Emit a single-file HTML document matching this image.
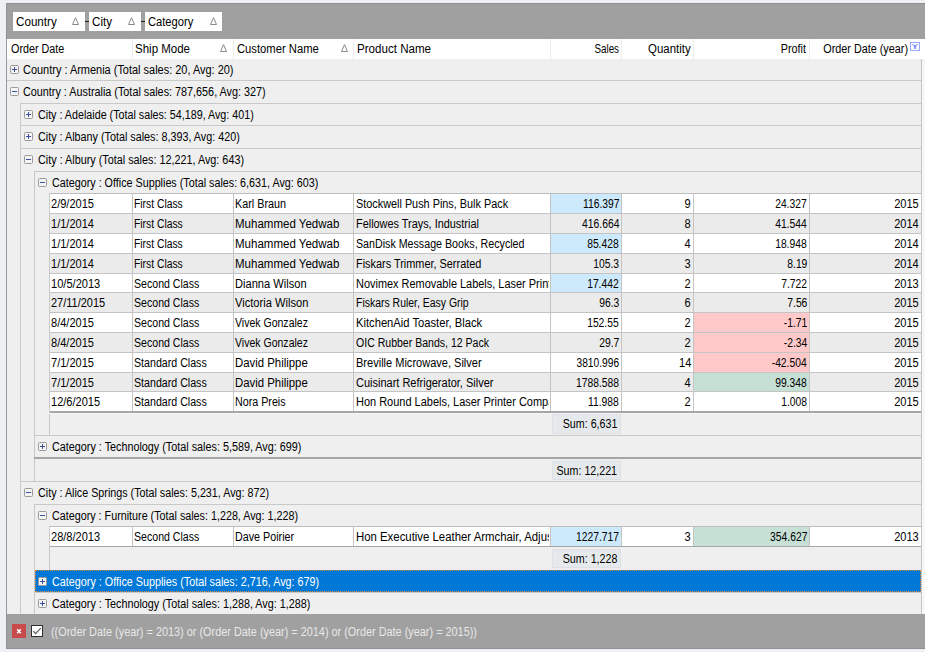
<!DOCTYPE html>
<html><head><meta charset="utf-8"><style>
html,body{margin:0;padding:0}
body{width:925px;height:652px;position:relative;overflow:hidden;background:#eff0f3;font-family:"Liberation Sans",sans-serif;font-size:12px;color:#000}
body>div{position:absolute}
.t{position:absolute;white-space:nowrap;line-height:14px}
.in{display:inline-block}
</style></head><body>
<div style="left:6px;top:3px;width:919px;height:36px;background:#a0a0a0"></div>
<div style="left:6px;top:3px;width:919px;height:1px;background:#8d9196"></div>
<div style="left:6px;top:3px;width:1px;height:36px;background:#8d9196"></div>
<div style="left:13px;top:12px;width:72px;height:19px;background:#fff"></div>
<span class="t" style="left:15.6px;top:15px;transform:scaleX(0.9700);transform-origin:0 0">Country</span>
<svg style="position:absolute;left:72px;top:17px" width="7" height="8"><path d="M3.5 0.6 L6.5 7.5 L0.5 7.5 Z" fill="none" stroke="#8a8a8a" stroke-width="1"/></svg>
<div style="left:89px;top:12px;width:52px;height:19px;background:#fff"></div>
<span class="t" style="left:91.6px;top:15px;transform:scaleX(0.9700);transform-origin:0 0">City</span>
<svg style="position:absolute;left:128px;top:17px" width="7" height="8"><path d="M3.5 0.6 L6.5 7.5 L0.5 7.5 Z" fill="none" stroke="#8a8a8a" stroke-width="1"/></svg>
<div style="left:145px;top:12px;width:77px;height:19px;background:#fff"></div>
<span class="t" style="left:147.6px;top:15px;transform:scaleX(0.9300);transform-origin:0 0">Category</span>
<svg style="position:absolute;left:210px;top:17px" width="7" height="8"><path d="M3.5 0.6 L6.5 7.5 L0.5 7.5 Z" fill="none" stroke="#8a8a8a" stroke-width="1"/></svg>
<div style="left:85px;top:21px;width:4px;height:1px;background:#222"></div>
<div style="left:141px;top:21px;width:4px;height:1px;background:#222"></div>
<div style="left:6px;top:39px;width:919px;height:20px;background:#fff"></div>
<div style="left:6px;top:39px;width:1px;height:20px;background:#959aa0"></div>
<div style="left:132px;top:39px;width:1px;height:20px;background:#ececec"></div>
<div style="left:233px;top:39px;width:1px;height:20px;background:#ececec"></div>
<div style="left:353px;top:39px;width:1px;height:20px;background:#ececec"></div>
<div style="left:550px;top:39px;width:1px;height:20px;background:#ececec"></div>
<div style="left:621px;top:39px;width:1px;height:20px;background:#ececec"></div>
<div style="left:693px;top:39px;width:1px;height:20px;background:#ececec"></div>
<div style="left:809px;top:39px;width:1px;height:20px;background:#ececec"></div>
<span class="t" style="left:10.5px;top:42px;transform:scaleX(0.8983);transform-origin:0 0">Order Date</span>
<span class="t" style="left:135px;top:42px;transform:scaleX(0.9589);transform-origin:0 0">Ship Mode</span>
<span class="t" style="left:236.5px;top:42px;transform:scaleX(0.9356);transform-origin:0 0">Customer Name</span>
<span class="t" style="left:356.5px;top:42px;transform:scaleX(0.9653);transform-origin:0 0">Product Name</span>
<span class="t" style="right:306px;top:42px;transform:scaleX(0.8172);transform-origin:100% 0">Sales</span>
<span class="t" style="right:234px;top:42px;transform:scaleX(0.9533);transform-origin:100% 0">Quantity</span>
<span class="t" style="right:118.5px;top:42px;transform:scaleX(0.9000);transform-origin:100% 0">Profit</span>
<span class="t" style="right:16.5px;top:42px;transform:scaleX(0.9021);transform-origin:100% 0">Order Date (year)</span>
<svg style="position:absolute;left:220px;top:44px" width="7" height="8"><path d="M3.5 0.6 L6.5 7.5 L0.5 7.5 Z" fill="none" stroke="#8a8a8a" stroke-width="1"/></svg>
<svg style="position:absolute;left:341px;top:44px" width="7" height="8"><path d="M3.5 0.6 L6.5 7.5 L0.5 7.5 Z" fill="none" stroke="#8a8a8a" stroke-width="1"/></svg>
<svg style="position:absolute;left:910px;top:42px" width="10" height="9"><rect x="0.5" y="0.5" width="9" height="8" fill="#fff" stroke="#9aa8ff"/><path d="M2.3 2.6 L4.5 3.6 L4.3 6.2 H5.7 L5.5 3.6 L7.7 2.6" fill="none" stroke="#7f90ff" stroke-width="1.1"/></svg>
<div style="left:7px;top:59px;width:914px;height:555px;background:#efefef"></div>
<div style="left:6px;top:59px;width:1px;height:555px;background:#959aa0"></div>
<div style="left:921px;top:59px;width:1px;height:555px;background:#c4c4c4"></div>
<div style="left:922px;top:59px;width:3px;height:555px;background:#f7f7f7"></div>
<svg style="position:absolute;left:10px;top:65px" width="9" height="9"><rect x="0.5" y="0.5" width="8" height="8" rx="1" fill="#f4f4f4" stroke="#9a9a9a"/><path d="M2 4.5 H7" stroke="#3b4f9a" stroke-width="1"/><path d="M4.5 2 V7" stroke="#3b4f9a" stroke-width="1"/></svg>
<span class="t" style="left:23.4px;top:63px;transform:scaleX(0.9130);transform-origin:0 0">Country : Armenia (Total sales: 20, Avg: 20)</span>
<div style="left:7px;top:80px;width:914px;height:1px;background:#c9c9c9"></div>
<svg style="position:absolute;left:10px;top:87px" width="9" height="9"><rect x="0.5" y="0.5" width="8" height="8" rx="1" fill="#f4f4f4" stroke="#9a9a9a"/><path d="M2 4.5 H7" stroke="#3b4f9a" stroke-width="1"/></svg>
<span class="t" style="left:23.4px;top:85px;transform:scaleX(0.9011);transform-origin:0 0">Country : Australia (Total sales: 787,656, Avg: 327)</span>
<div style="left:20px;top:103px;width:901px;height:1px;background:#c9c9c9"></div>
<svg style="position:absolute;left:24px;top:110px" width="9" height="9"><rect x="0.5" y="0.5" width="8" height="8" rx="1" fill="#f4f4f4" stroke="#9a9a9a"/><path d="M2 4.5 H7" stroke="#3b4f9a" stroke-width="1"/><path d="M4.5 2 V7" stroke="#3b4f9a" stroke-width="1"/></svg>
<span class="t" style="left:37.7px;top:108px;transform:scaleX(0.8942);transform-origin:0 0">City : Adelaide (Total sales: 54,189, Avg: 401)</span>
<div style="left:20px;top:125px;width:901px;height:1px;background:#c9c9c9"></div>
<svg style="position:absolute;left:24px;top:132px" width="9" height="9"><rect x="0.5" y="0.5" width="8" height="8" rx="1" fill="#f4f4f4" stroke="#9a9a9a"/><path d="M2 4.5 H7" stroke="#3b4f9a" stroke-width="1"/><path d="M4.5 2 V7" stroke="#3b4f9a" stroke-width="1"/></svg>
<span class="t" style="left:37.7px;top:130px;transform:scaleX(0.8987);transform-origin:0 0">City : Albany (Total sales: 8,393, Avg: 420)</span>
<div style="left:20px;top:148px;width:901px;height:1px;background:#c9c9c9"></div>
<svg style="position:absolute;left:24px;top:155px" width="9" height="9"><rect x="0.5" y="0.5" width="8" height="8" rx="1" fill="#f4f4f4" stroke="#9a9a9a"/><path d="M2 4.5 H7" stroke="#3b4f9a" stroke-width="1"/></svg>
<span class="t" style="left:37.7px;top:153px;transform:scaleX(0.9013);transform-origin:0 0">City : Albury (Total sales: 12,221, Avg: 643)</span>
<div style="left:34px;top:171px;width:887px;height:1px;background:#c9c9c9"></div>
<svg style="position:absolute;left:38px;top:178px" width="9" height="9"><rect x="0.5" y="0.5" width="8" height="8" rx="1" fill="#f4f4f4" stroke="#9a9a9a"/><path d="M2 4.5 H7" stroke="#3b4f9a" stroke-width="1"/></svg>
<span class="t" style="left:52.2px;top:176px;transform:scaleX(0.8963);transform-origin:0 0">Category : Office Supplies (Total sales: 6,631, Avg: 603)</span>
<div style="left:20px;top:103px;width:1px;height:511px;background:#c9c9c9"></div>
<div style="left:34px;top:171px;width:1px;height:310px;background:#c9c9c9"></div>
<div style="left:34px;top:504px;width:1px;height:110px;background:#c9c9c9"></div>
<div style="left:50px;top:194px;width:871px;height:19px;background:#ffffff"></div>
<div style="left:551px;top:194px;width:70px;height:19px;background:#cdeafc"></div>
<div style="left:132px;top:194px;width:1px;height:19px;background:#c4c4c4"></div>
<div style="left:233px;top:194px;width:1px;height:19px;background:#c4c4c4"></div>
<div style="left:353px;top:194px;width:1px;height:19px;background:#c4c4c4"></div>
<div style="left:550px;top:194px;width:1px;height:19px;background:#c4c4c4"></div>
<div style="left:621px;top:194px;width:1px;height:19px;background:#c4c4c4"></div>
<div style="left:693px;top:194px;width:1px;height:19px;background:#c4c4c4"></div>
<div style="left:809px;top:194px;width:1px;height:19px;background:#c4c4c4"></div>
<span class="t" style="left:51.3px;top:197px;width:79px;overflow:hidden"><span class="in" style="transform:scaleX(0.9200);transform-origin:0 0">2/9/2015</span></span>
<span class="t" style="left:134.3px;top:197px;width:97px;overflow:hidden"><span class="in" style="transform:scaleX(0.8607);transform-origin:0 0">First Class</span></span>
<span class="t" style="left:235.4px;top:197px;width:116px;overflow:hidden"><span class="in" style="transform:scaleX(0.9000);transform-origin:0 0">Karl Braun</span></span>
<span class="t" style="left:355.6px;top:197px;width:193px;overflow:hidden"><span class="in" style="transform:scaleX(0.9048);transform-origin:0 0">Stockwell Push Pins, Bulk Pack</span></span>
<span class="t" style="right:306px;top:197px;transform:scaleX(0.8600);transform-origin:100% 0">116.397</span>
<span class="t" style="right:234px;top:197px;transform:scaleX(0.9200);transform-origin:100% 0">9</span>
<span class="t" style="right:118px;top:197px;transform:scaleX(0.8600);transform-origin:100% 0">24.327</span>
<span class="t" style="right:6px;top:197px;transform:scaleX(0.9200);transform-origin:100% 0">2015</span>
<div style="left:50px;top:214px;width:871px;height:19px;background:#ebebeb"></div>
<div style="left:132px;top:214px;width:1px;height:19px;background:#c4c4c4"></div>
<div style="left:233px;top:214px;width:1px;height:19px;background:#c4c4c4"></div>
<div style="left:353px;top:214px;width:1px;height:19px;background:#c4c4c4"></div>
<div style="left:550px;top:214px;width:1px;height:19px;background:#c4c4c4"></div>
<div style="left:621px;top:214px;width:1px;height:19px;background:#c4c4c4"></div>
<div style="left:693px;top:214px;width:1px;height:19px;background:#c4c4c4"></div>
<div style="left:809px;top:214px;width:1px;height:19px;background:#c4c4c4"></div>
<span class="t" style="left:51.3px;top:217px;width:79px;overflow:hidden"><span class="in" style="transform:scaleX(0.9200);transform-origin:0 0">1/1/2014</span></span>
<span class="t" style="left:134.3px;top:217px;width:97px;overflow:hidden"><span class="in" style="transform:scaleX(0.8607);transform-origin:0 0">First Class</span></span>
<span class="t" style="left:235.4px;top:217px;width:116px;overflow:hidden"><span class="in" style="transform:scaleX(0.9598);transform-origin:0 0">Muhammed Yedwab</span></span>
<span class="t" style="left:355.6px;top:217px;width:193px;overflow:hidden"><span class="in" style="transform:scaleX(0.9075);transform-origin:0 0">Fellowes Trays, Industrial</span></span>
<span class="t" style="right:306px;top:217px;transform:scaleX(0.8600);transform-origin:100% 0">416.664</span>
<span class="t" style="right:234px;top:217px;transform:scaleX(0.9200);transform-origin:100% 0">8</span>
<span class="t" style="right:118px;top:217px;transform:scaleX(0.8600);transform-origin:100% 0">41.544</span>
<span class="t" style="right:6px;top:217px;transform:scaleX(0.9200);transform-origin:100% 0">2014</span>
<div style="left:50px;top:234px;width:871px;height:19px;background:#ffffff"></div>
<div style="left:551px;top:234px;width:70px;height:19px;background:#cdeafc"></div>
<div style="left:132px;top:234px;width:1px;height:19px;background:#c4c4c4"></div>
<div style="left:233px;top:234px;width:1px;height:19px;background:#c4c4c4"></div>
<div style="left:353px;top:234px;width:1px;height:19px;background:#c4c4c4"></div>
<div style="left:550px;top:234px;width:1px;height:19px;background:#c4c4c4"></div>
<div style="left:621px;top:234px;width:1px;height:19px;background:#c4c4c4"></div>
<div style="left:693px;top:234px;width:1px;height:19px;background:#c4c4c4"></div>
<div style="left:809px;top:234px;width:1px;height:19px;background:#c4c4c4"></div>
<span class="t" style="left:51.3px;top:237px;width:79px;overflow:hidden"><span class="in" style="transform:scaleX(0.9200);transform-origin:0 0">1/1/2014</span></span>
<span class="t" style="left:134.3px;top:237px;width:97px;overflow:hidden"><span class="in" style="transform:scaleX(0.8607);transform-origin:0 0">First Class</span></span>
<span class="t" style="left:235.4px;top:237px;width:116px;overflow:hidden"><span class="in" style="transform:scaleX(0.9598);transform-origin:0 0">Muhammed Yedwab</span></span>
<span class="t" style="left:355.6px;top:237px;width:193px;overflow:hidden"><span class="in" style="transform:scaleX(0.8894);transform-origin:0 0">SanDisk Message Books, Recycled</span></span>
<span class="t" style="right:306px;top:237px;transform:scaleX(0.8600);transform-origin:100% 0">85.428</span>
<span class="t" style="right:234px;top:237px;transform:scaleX(0.9200);transform-origin:100% 0">4</span>
<span class="t" style="right:118px;top:237px;transform:scaleX(0.8600);transform-origin:100% 0">18.948</span>
<span class="t" style="right:6px;top:237px;transform:scaleX(0.9200);transform-origin:100% 0">2014</span>
<div style="left:50px;top:254px;width:871px;height:19px;background:#ebebeb"></div>
<div style="left:132px;top:254px;width:1px;height:19px;background:#c4c4c4"></div>
<div style="left:233px;top:254px;width:1px;height:19px;background:#c4c4c4"></div>
<div style="left:353px;top:254px;width:1px;height:19px;background:#c4c4c4"></div>
<div style="left:550px;top:254px;width:1px;height:19px;background:#c4c4c4"></div>
<div style="left:621px;top:254px;width:1px;height:19px;background:#c4c4c4"></div>
<div style="left:693px;top:254px;width:1px;height:19px;background:#c4c4c4"></div>
<div style="left:809px;top:254px;width:1px;height:19px;background:#c4c4c4"></div>
<span class="t" style="left:51.3px;top:257px;width:79px;overflow:hidden"><span class="in" style="transform:scaleX(0.9200);transform-origin:0 0">1/1/2014</span></span>
<span class="t" style="left:134.3px;top:257px;width:97px;overflow:hidden"><span class="in" style="transform:scaleX(0.8607);transform-origin:0 0">First Class</span></span>
<span class="t" style="left:235.4px;top:257px;width:116px;overflow:hidden"><span class="in" style="transform:scaleX(0.9598);transform-origin:0 0">Muhammed Yedwab</span></span>
<span class="t" style="left:355.6px;top:257px;width:193px;overflow:hidden"><span class="in" style="transform:scaleX(0.9081);transform-origin:0 0">Fiskars Trimmer, Serrated</span></span>
<span class="t" style="right:306px;top:257px;transform:scaleX(0.8600);transform-origin:100% 0">105.3</span>
<span class="t" style="right:234px;top:257px;transform:scaleX(0.9200);transform-origin:100% 0">3</span>
<span class="t" style="right:118px;top:257px;transform:scaleX(0.8600);transform-origin:100% 0">8.19</span>
<span class="t" style="right:6px;top:257px;transform:scaleX(0.9200);transform-origin:100% 0">2014</span>
<div style="left:50px;top:274px;width:871px;height:18px;background:#ffffff"></div>
<div style="left:551px;top:274px;width:70px;height:18px;background:#cdeafc"></div>
<div style="left:132px;top:274px;width:1px;height:18px;background:#c4c4c4"></div>
<div style="left:233px;top:274px;width:1px;height:18px;background:#c4c4c4"></div>
<div style="left:353px;top:274px;width:1px;height:18px;background:#c4c4c4"></div>
<div style="left:550px;top:274px;width:1px;height:18px;background:#c4c4c4"></div>
<div style="left:621px;top:274px;width:1px;height:18px;background:#c4c4c4"></div>
<div style="left:693px;top:274px;width:1px;height:18px;background:#c4c4c4"></div>
<div style="left:809px;top:274px;width:1px;height:18px;background:#c4c4c4"></div>
<span class="t" style="left:51.3px;top:277px;width:79px;overflow:hidden"><span class="in" style="transform:scaleX(0.9231);transform-origin:0 0">10/5/2013</span></span>
<span class="t" style="left:134.3px;top:277px;width:97px;overflow:hidden"><span class="in" style="transform:scaleX(0.8822);transform-origin:0 0">Second Class</span></span>
<span class="t" style="left:235.4px;top:277px;width:116px;overflow:hidden"><span class="in" style="transform:scaleX(0.9250);transform-origin:0 0">Dianna Wilson</span></span>
<span class="t" style="left:355.6px;top:277px;width:193px;overflow:hidden"><span class="in" style="transform:scaleX(0.9120);transform-origin:0 0">Novimex Removable Labels, Laser Printer</span></span>
<span class="t" style="right:306px;top:277px;transform:scaleX(0.8600);transform-origin:100% 0">17.442</span>
<span class="t" style="right:234px;top:277px;transform:scaleX(0.9200);transform-origin:100% 0">2</span>
<span class="t" style="right:118px;top:277px;transform:scaleX(0.8600);transform-origin:100% 0">7.722</span>
<span class="t" style="right:6px;top:277px;transform:scaleX(0.9200);transform-origin:100% 0">2013</span>
<div style="left:50px;top:293px;width:871px;height:19px;background:#ebebeb"></div>
<div style="left:132px;top:293px;width:1px;height:19px;background:#c4c4c4"></div>
<div style="left:233px;top:293px;width:1px;height:19px;background:#c4c4c4"></div>
<div style="left:353px;top:293px;width:1px;height:19px;background:#c4c4c4"></div>
<div style="left:550px;top:293px;width:1px;height:19px;background:#c4c4c4"></div>
<div style="left:621px;top:293px;width:1px;height:19px;background:#c4c4c4"></div>
<div style="left:693px;top:293px;width:1px;height:19px;background:#c4c4c4"></div>
<div style="left:809px;top:293px;width:1px;height:19px;background:#c4c4c4"></div>
<span class="t" style="left:51.3px;top:296px;width:79px;overflow:hidden"><span class="in" style="transform:scaleX(0.9153);transform-origin:0 0">27/11/2015</span></span>
<span class="t" style="left:134.3px;top:296px;width:97px;overflow:hidden"><span class="in" style="transform:scaleX(0.8822);transform-origin:0 0">Second Class</span></span>
<span class="t" style="left:235.4px;top:296px;width:116px;overflow:hidden"><span class="in" style="transform:scaleX(0.9266);transform-origin:0 0">Victoria Wilson</span></span>
<span class="t" style="left:355.6px;top:296px;width:193px;overflow:hidden"><span class="in" style="transform:scaleX(0.8711);transform-origin:0 0">Fiskars Ruler, Easy Grip</span></span>
<span class="t" style="right:306px;top:296px;transform:scaleX(0.8600);transform-origin:100% 0">96.3</span>
<span class="t" style="right:234px;top:296px;transform:scaleX(0.9200);transform-origin:100% 0">6</span>
<span class="t" style="right:118px;top:296px;transform:scaleX(0.8600);transform-origin:100% 0">7.56</span>
<span class="t" style="right:6px;top:296px;transform:scaleX(0.9200);transform-origin:100% 0">2015</span>
<div style="left:50px;top:313px;width:871px;height:19px;background:#ffffff"></div>
<div style="left:694px;top:313px;width:115px;height:19px;background:#ffc9c9"></div>
<div style="left:132px;top:313px;width:1px;height:19px;background:#c4c4c4"></div>
<div style="left:233px;top:313px;width:1px;height:19px;background:#c4c4c4"></div>
<div style="left:353px;top:313px;width:1px;height:19px;background:#c4c4c4"></div>
<div style="left:550px;top:313px;width:1px;height:19px;background:#c4c4c4"></div>
<div style="left:621px;top:313px;width:1px;height:19px;background:#c4c4c4"></div>
<div style="left:693px;top:313px;width:1px;height:19px;background:#c4c4c4"></div>
<div style="left:809px;top:313px;width:1px;height:19px;background:#c4c4c4"></div>
<span class="t" style="left:51.3px;top:316px;width:79px;overflow:hidden"><span class="in" style="transform:scaleX(0.9200);transform-origin:0 0">8/4/2015</span></span>
<span class="t" style="left:134.3px;top:316px;width:97px;overflow:hidden"><span class="in" style="transform:scaleX(0.8822);transform-origin:0 0">Second Class</span></span>
<span class="t" style="left:235.4px;top:316px;width:116px;overflow:hidden"><span class="in" style="transform:scaleX(0.8771);transform-origin:0 0">Vivek Gonzalez</span></span>
<span class="t" style="left:355.6px;top:316px;width:193px;overflow:hidden"><span class="in" style="transform:scaleX(0.9328);transform-origin:0 0">KitchenAid Toaster, Black</span></span>
<span class="t" style="right:306px;top:316px;transform:scaleX(0.8600);transform-origin:100% 0">152.55</span>
<span class="t" style="right:234px;top:316px;transform:scaleX(0.9200);transform-origin:100% 0">2</span>
<span class="t" style="right:118px;top:316px;transform:scaleX(0.8600);transform-origin:100% 0">-1.71</span>
<span class="t" style="right:6px;top:316px;transform:scaleX(0.9200);transform-origin:100% 0">2015</span>
<div style="left:50px;top:333px;width:871px;height:19px;background:#ebebeb"></div>
<div style="left:694px;top:333px;width:115px;height:19px;background:#ffc9c9"></div>
<div style="left:132px;top:333px;width:1px;height:19px;background:#c4c4c4"></div>
<div style="left:233px;top:333px;width:1px;height:19px;background:#c4c4c4"></div>
<div style="left:353px;top:333px;width:1px;height:19px;background:#c4c4c4"></div>
<div style="left:550px;top:333px;width:1px;height:19px;background:#c4c4c4"></div>
<div style="left:621px;top:333px;width:1px;height:19px;background:#c4c4c4"></div>
<div style="left:693px;top:333px;width:1px;height:19px;background:#c4c4c4"></div>
<div style="left:809px;top:333px;width:1px;height:19px;background:#c4c4c4"></div>
<span class="t" style="left:51.3px;top:336px;width:79px;overflow:hidden"><span class="in" style="transform:scaleX(0.9200);transform-origin:0 0">8/4/2015</span></span>
<span class="t" style="left:134.3px;top:336px;width:97px;overflow:hidden"><span class="in" style="transform:scaleX(0.8822);transform-origin:0 0">Second Class</span></span>
<span class="t" style="left:235.4px;top:336px;width:116px;overflow:hidden"><span class="in" style="transform:scaleX(0.8771);transform-origin:0 0">Vivek Gonzalez</span></span>
<span class="t" style="left:355.6px;top:336px;width:193px;overflow:hidden"><span class="in" style="transform:scaleX(0.8783);transform-origin:0 0">OIC Rubber Bands, 12 Pack</span></span>
<span class="t" style="right:306px;top:336px;transform:scaleX(0.8600);transform-origin:100% 0">29.7</span>
<span class="t" style="right:234px;top:336px;transform:scaleX(0.9200);transform-origin:100% 0">2</span>
<span class="t" style="right:118px;top:336px;transform:scaleX(0.8600);transform-origin:100% 0">-2.34</span>
<span class="t" style="right:6px;top:336px;transform:scaleX(0.9200);transform-origin:100% 0">2015</span>
<div style="left:50px;top:353px;width:871px;height:19px;background:#ffffff"></div>
<div style="left:694px;top:353px;width:115px;height:19px;background:#ffc9c9"></div>
<div style="left:132px;top:353px;width:1px;height:19px;background:#c4c4c4"></div>
<div style="left:233px;top:353px;width:1px;height:19px;background:#c4c4c4"></div>
<div style="left:353px;top:353px;width:1px;height:19px;background:#c4c4c4"></div>
<div style="left:550px;top:353px;width:1px;height:19px;background:#c4c4c4"></div>
<div style="left:621px;top:353px;width:1px;height:19px;background:#c4c4c4"></div>
<div style="left:693px;top:353px;width:1px;height:19px;background:#c4c4c4"></div>
<div style="left:809px;top:353px;width:1px;height:19px;background:#c4c4c4"></div>
<span class="t" style="left:51.3px;top:356px;width:79px;overflow:hidden"><span class="in" style="transform:scaleX(0.9200);transform-origin:0 0">7/1/2015</span></span>
<span class="t" style="left:134.3px;top:356px;width:97px;overflow:hidden"><span class="in" style="transform:scaleX(0.8864);transform-origin:0 0">Standard Class</span></span>
<span class="t" style="left:235.4px;top:356px;width:116px;overflow:hidden"><span class="in" style="transform:scaleX(0.9480);transform-origin:0 0">David Philippe</span></span>
<span class="t" style="left:355.6px;top:356px;width:193px;overflow:hidden"><span class="in" style="transform:scaleX(0.9191);transform-origin:0 0">Breville Microwave, Silver</span></span>
<span class="t" style="right:306px;top:356px;transform:scaleX(0.8500);transform-origin:100% 0">3810.996</span>
<span class="t" style="right:234px;top:356px;transform:scaleX(0.9200);transform-origin:100% 0">14</span>
<span class="t" style="right:118px;top:356px;transform:scaleX(0.8600);transform-origin:100% 0">-42.504</span>
<span class="t" style="right:6px;top:356px;transform:scaleX(0.9200);transform-origin:100% 0">2015</span>
<div style="left:50px;top:373px;width:871px;height:18px;background:#ebebeb"></div>
<div style="left:694px;top:373px;width:115px;height:18px;background:#c7e0d6"></div>
<div style="left:132px;top:373px;width:1px;height:18px;background:#c4c4c4"></div>
<div style="left:233px;top:373px;width:1px;height:18px;background:#c4c4c4"></div>
<div style="left:353px;top:373px;width:1px;height:18px;background:#c4c4c4"></div>
<div style="left:550px;top:373px;width:1px;height:18px;background:#c4c4c4"></div>
<div style="left:621px;top:373px;width:1px;height:18px;background:#c4c4c4"></div>
<div style="left:693px;top:373px;width:1px;height:18px;background:#c4c4c4"></div>
<div style="left:809px;top:373px;width:1px;height:18px;background:#c4c4c4"></div>
<span class="t" style="left:51.3px;top:376px;width:79px;overflow:hidden"><span class="in" style="transform:scaleX(0.9200);transform-origin:0 0">7/1/2015</span></span>
<span class="t" style="left:134.3px;top:376px;width:97px;overflow:hidden"><span class="in" style="transform:scaleX(0.8864);transform-origin:0 0">Standard Class</span></span>
<span class="t" style="left:235.4px;top:376px;width:116px;overflow:hidden"><span class="in" style="transform:scaleX(0.9480);transform-origin:0 0">David Philippe</span></span>
<span class="t" style="left:355.6px;top:376px;width:193px;overflow:hidden"><span class="in" style="transform:scaleX(0.9160);transform-origin:0 0">Cuisinart Refrigerator, Silver</span></span>
<span class="t" style="right:306px;top:376px;transform:scaleX(0.8600);transform-origin:100% 0">1788.588</span>
<span class="t" style="right:234px;top:376px;transform:scaleX(0.9200);transform-origin:100% 0">4</span>
<span class="t" style="right:118px;top:376px;transform:scaleX(0.8600);transform-origin:100% 0">99.348</span>
<span class="t" style="right:6px;top:376px;transform:scaleX(0.9200);transform-origin:100% 0">2015</span>
<div style="left:50px;top:392px;width:871px;height:19px;background:#ffffff"></div>
<div style="left:132px;top:392px;width:1px;height:19px;background:#c4c4c4"></div>
<div style="left:233px;top:392px;width:1px;height:19px;background:#c4c4c4"></div>
<div style="left:353px;top:392px;width:1px;height:19px;background:#c4c4c4"></div>
<div style="left:550px;top:392px;width:1px;height:19px;background:#c4c4c4"></div>
<div style="left:621px;top:392px;width:1px;height:19px;background:#c4c4c4"></div>
<div style="left:693px;top:392px;width:1px;height:19px;background:#c4c4c4"></div>
<div style="left:809px;top:392px;width:1px;height:19px;background:#c4c4c4"></div>
<span class="t" style="left:51.3px;top:395px;width:79px;overflow:hidden"><span class="in" style="transform:scaleX(0.9200);transform-origin:0 0">12/6/2015</span></span>
<span class="t" style="left:134.3px;top:395px;width:97px;overflow:hidden"><span class="in" style="transform:scaleX(0.8864);transform-origin:0 0">Standard Class</span></span>
<span class="t" style="left:235.4px;top:395px;width:116px;overflow:hidden"><span class="in" style="transform:scaleX(0.8929);transform-origin:0 0">Nora Preis</span></span>
<span class="t" style="left:355.6px;top:395px;width:193px;overflow:hidden"><span class="in" style="transform:scaleX(0.9148);transform-origin:0 0">Hon Round Labels, Laser Printer Compatible</span></span>
<span class="t" style="right:306px;top:395px;transform:scaleX(0.8600);transform-origin:100% 0">11.988</span>
<span class="t" style="right:234px;top:395px;transform:scaleX(0.9200);transform-origin:100% 0">2</span>
<span class="t" style="right:118px;top:395px;transform:scaleX(0.8600);transform-origin:100% 0">1.008</span>
<span class="t" style="right:6px;top:395px;transform:scaleX(0.9200);transform-origin:100% 0">2015</span>
<div style="left:49px;top:213px;width:872px;height:1px;background:#c4c4c4"></div>
<div style="left:49px;top:233px;width:872px;height:1px;background:#c4c4c4"></div>
<div style="left:49px;top:253px;width:872px;height:1px;background:#c4c4c4"></div>
<div style="left:49px;top:273px;width:872px;height:1px;background:#c4c4c4"></div>
<div style="left:49px;top:292px;width:872px;height:1px;background:#c4c4c4"></div>
<div style="left:49px;top:312px;width:872px;height:1px;background:#c4c4c4"></div>
<div style="left:49px;top:332px;width:872px;height:1px;background:#c4c4c4"></div>
<div style="left:49px;top:352px;width:872px;height:1px;background:#c4c4c4"></div>
<div style="left:49px;top:372px;width:872px;height:1px;background:#c4c4c4"></div>
<div style="left:49px;top:391px;width:872px;height:1px;background:#c4c4c4"></div>
<div style="left:49px;top:193px;width:872px;height:1px;background:#bdbdbd"></div>
<div style="left:49px;top:411px;width:872px;height:2px;background:#a6a6a6"></div>
<div style="left:49px;top:193px;width:1px;height:242px;background:#c9c9c9"></div>
<div style="left:49px;top:413px;width:872px;height:1px;background:#f6f6f8"></div>
<div style="left:552px;top:414px;width:69px;height:20px;background:#e6e9ec;border:1px solid #dde1e5;box-sizing:border-box"></div>
<span class="t" style="right:308px;top:417px;transform:scaleX(0.8900);transform-origin:100% 0">Sum: 6,631</span>
<div style="left:34px;top:435px;width:887px;height:1px;background:#c9c9c9"></div>
<svg style="position:absolute;left:38px;top:442px" width="9" height="9"><rect x="0.5" y="0.5" width="8" height="8" rx="1" fill="#f4f4f4" stroke="#9a9a9a"/><path d="M2 4.5 H7" stroke="#3b4f9a" stroke-width="1"/><path d="M4.5 2 V7" stroke="#3b4f9a" stroke-width="1"/></svg>
<span class="t" style="left:52.2px;top:440px;transform:scaleX(0.9000);transform-origin:0 0">Category : Technology (Total sales: 5,589, Avg: 699)</span>
<div style="left:34px;top:457px;width:887px;height:2px;background:#a6a6a6"></div>
<div style="left:552px;top:461px;width:69px;height:19px;background:#e6e9ec;border:1px solid #dde1e5;box-sizing:border-box"></div>
<span class="t" style="right:308px;top:464px;transform:scaleX(0.8900);transform-origin:100% 0">Sum: 12,221</span>
<div style="left:20px;top:481px;width:901px;height:1px;background:#c9c9c9"></div>
<svg style="position:absolute;left:24px;top:488px" width="9" height="9"><rect x="0.5" y="0.5" width="8" height="8" rx="1" fill="#f4f4f4" stroke="#9a9a9a"/><path d="M2 4.5 H7" stroke="#3b4f9a" stroke-width="1"/></svg>
<span class="t" style="left:37.7px;top:486px;transform:scaleX(0.8957);transform-origin:0 0">City : Alice Springs (Total sales: 5,231, Avg: 872)</span>
<div style="left:34px;top:504px;width:887px;height:1px;background:#c9c9c9"></div>
<svg style="position:absolute;left:38px;top:511px" width="9" height="9"><rect x="0.5" y="0.5" width="8" height="8" rx="1" fill="#f4f4f4" stroke="#9a9a9a"/><path d="M2 4.5 H7" stroke="#3b4f9a" stroke-width="1"/></svg>
<span class="t" style="left:52.2px;top:509px;transform:scaleX(0.8960);transform-origin:0 0">Category : Furniture (Total sales: 1,228, Avg: 1,228)</span>
<div style="left:49px;top:526px;width:872px;height:1px;background:#bdbdbd"></div>
<div style="left:50px;top:527px;width:871px;height:19px;background:#ffffff"></div>
<div style="left:551px;top:527px;width:70px;height:19px;background:#cdeafc"></div>
<div style="left:694px;top:527px;width:115px;height:19px;background:#c7e0d6"></div>
<div style="left:132px;top:527px;width:1px;height:19px;background:#c4c4c4"></div>
<div style="left:233px;top:527px;width:1px;height:19px;background:#c4c4c4"></div>
<div style="left:353px;top:527px;width:1px;height:19px;background:#c4c4c4"></div>
<div style="left:550px;top:527px;width:1px;height:19px;background:#c4c4c4"></div>
<div style="left:621px;top:527px;width:1px;height:19px;background:#c4c4c4"></div>
<div style="left:693px;top:527px;width:1px;height:19px;background:#c4c4c4"></div>
<div style="left:809px;top:527px;width:1px;height:19px;background:#c4c4c4"></div>
<span class="t" style="left:51.3px;top:530px;width:79px;overflow:hidden"><span class="in" style="transform:scaleX(0.9200);transform-origin:0 0">28/8/2013</span></span>
<span class="t" style="left:134.3px;top:530px;width:97px;overflow:hidden"><span class="in" style="transform:scaleX(0.8822);transform-origin:0 0">Second Class</span></span>
<span class="t" style="left:235.4px;top:530px;width:116px;overflow:hidden"><span class="in" style="transform:scaleX(0.8954);transform-origin:0 0">Dave Poirier</span></span>
<span class="t" style="left:355.6px;top:530px;width:193px;overflow:hidden"><span class="in" style="transform:scaleX(0.9480);transform-origin:0 0">Hon Executive Leather Armchair, Adjustable</span></span>
<span class="t" style="right:306px;top:530px;transform:scaleX(0.8600);transform-origin:100% 0">1227.717</span>
<span class="t" style="right:234px;top:530px;transform:scaleX(0.9200);transform-origin:100% 0">3</span>
<span class="t" style="right:118px;top:530px;transform:scaleX(0.8600);transform-origin:100% 0">354.627</span>
<span class="t" style="right:6px;top:530px;transform:scaleX(0.9200);transform-origin:100% 0">2013</span>
<div style="left:49px;top:546px;width:872px;height:1px;background:#a6a6a6"></div>
<div style="left:49px;top:526px;width:1px;height:44px;background:#c9c9c9"></div>
<div style="left:552px;top:549px;width:69px;height:19px;background:#e6e9ec;border:1px solid #dde1e5;box-sizing:border-box"></div>
<span class="t" style="right:308px;top:552px;transform:scaleX(0.8900);transform-origin:100% 0">Sum: 1,228</span>
<div style="left:35px;top:570px;width:886px;height:22px;background:#0078d7;outline:1px dotted #d08a3a;outline-offset:-1px"></div>
<svg style="position:absolute;left:38px;top:577px" width="9" height="9"><rect x="0.5" y="0.5" width="8" height="8" rx="1" fill="#f4f4f4" stroke="#9a9a9a"/><path d="M2 4.5 H7" stroke="#3b4f9a" stroke-width="1"/><path d="M4.5 2 V7" stroke="#3b4f9a" stroke-width="1"/></svg>
<span class="t" style="left:52.2px;top:575px;color:#fff;transform:scaleX(0.8993);transform-origin:0 0">Category : Office Supplies (Total sales: 2,716, Avg: 679)</span>
<div style="left:34px;top:592px;width:887px;height:1px;background:#c9c9c9"></div>
<svg style="position:absolute;left:38px;top:599px" width="9" height="9"><rect x="0.5" y="0.5" width="8" height="8" rx="1" fill="#f4f4f4" stroke="#9a9a9a"/><path d="M2 4.5 H7" stroke="#3b4f9a" stroke-width="1"/><path d="M4.5 2 V7" stroke="#3b4f9a" stroke-width="1"/></svg>
<span class="t" style="left:52.2px;top:597px;transform:scaleX(0.9000);transform-origin:0 0">Category : Technology (Total sales: 1,288, Avg: 1,288)</span>
<div style="left:6px;top:614px;width:919px;height:35px;background:#a0a0a0"></div>
<div style="left:6px;top:614px;width:1px;height:35px;background:#8d9196"></div>
<div style="left:6px;top:648px;width:919px;height:1px;background:#8d9196"></div>
<div style="left:12px;top:624px;width:14px;height:14px;background:#c94a4d"></div>
<svg style="position:absolute;left:12px;top:624px" width="14" height="14"><path d="M5.2 5.3 L8.8 9.2 M8.8 5.3 L5.2 9.2" stroke="#fff" stroke-width="1.5"/></svg>
<div style="left:31px;top:625px;width:12px;height:12px;background:#fff;border:1px solid #2e2e2e;box-sizing:border-box"></div>
<svg style="position:absolute;left:31px;top:625px" width="12" height="12"><path d="M2.3 6.2 L4.6 8.6 L9.8 3.2" fill="none" stroke="#555" stroke-width="1.1"/></svg>
<span class="t" style="left:51.4px;top:625px;color:#e8e8e8;transform:scaleX(0.9066);transform-origin:0 0">((Order Date (year) = 2013) or (Order Date (year) = 2014) or (Order Date (year) = 2015))</span>
</body></html>
